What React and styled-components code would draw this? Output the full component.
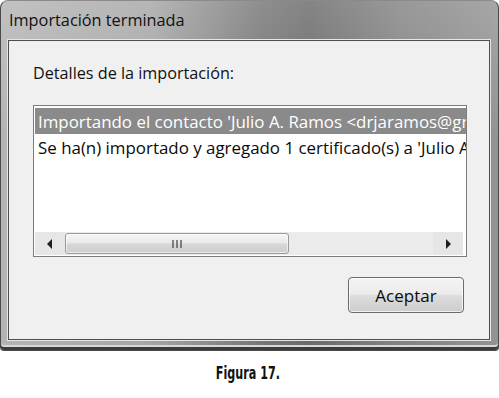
import styled, { createGlobalStyle } from 'styled-components';

const GlobalStyle = createGlobalStyle`
  html, body {
    margin: 0;
    padding: 0;
    background: #ffffff;
  }
`

const Page = styled.div`
  width: 499px;
  height: 398px;
  display: flex;
  flex-direction: column;
  background: #ffffff;
  font-family: "Open Sans", "Noto Sans", sans-serif;
`

const Window = styled.div`
  width: 499px;
  height: 351px;
  box-sizing: border-box;
  display: flex;
  flex-direction: column;
  padding: 0 8px 10px 7px;
  border: 1px solid #4a4a4a;
  border-top-color: #8a8a8a;
  border-radius: 8px 8px 4px 4px;
  background:
    linear-gradient(180deg, rgba(255,255,255,0.18) 0%, rgba(255,255,255,0) 40%),
    linear-gradient(90deg, #b4b4b4 0%, #a6a6a6 30%, #767676 52%, #6a6a6a 62%, #828282 80%, #939393 100%);
  box-shadow: inset 0 -3px 0 #3c3c3c, inset 0 -5px 0 #d8d8d8;
`

const TitleBar = styled.div`
  height: 39px;
  display: flex;
  align-items: center;
  padding-left: 1px;
  padding-bottom: 2px;
  box-sizing: border-box;
  font-size: 16.3px;
  color: #111111;
`

const Client = styled.div`
  flex: 1;
  display: flex;
  flex-direction: column;
  background: #f0f0f0;
  border: 1px solid #4e4e4e;
  box-shadow: 0 0 0 1px #e6e6e6;
  padding: 21px 22px 0 24px;
`

const Label = styled.div`
  font-size: 16.2px;
  line-height: 22px;
  color: #111111;
  margin-bottom: 21px;
`

const ListBox = styled.div`
  height: 152px;
  box-sizing: border-box;
  display: flex;
  flex-direction: column;
  background: #ffffff;
  border: 1px solid #7c7c7c;
  padding: 2px 0 1px 1px;
  overflow: hidden;
`

const Rows = styled.div`
  flex: 1;
  overflow: hidden;
`

const Row = styled.div`
  height: 26px;
  display: flex;
  align-items: center;
  padding-left: 3px;
  font-size: 16.9px;
  white-space: nowrap;
  overflow: hidden;
  color: ${p => (p.$selected ? '#ffffff' : '#0a0a0a')};
  background: ${p => (p.$selected ? '#8a8a8a' : 'transparent')};
`

const ScrollBar = styled.div`
  height: 23px;
  display: flex;
  align-items: stretch;
  background: #ebebeb;
  margin-right: 3px;
`

const ArrowButton = styled.div`
  width: 30px;
  display: flex;
  align-items: center;
  justify-content: center;
  background: #e6e6e6;
`

const Track = styled.div`
  flex: 1;
  display: flex;
  padding: 1px 0;
`

const Thumb = styled.div`
  width: 224px;
  display: flex;
  align-items: center;
  justify-content: center;
  box-sizing: border-box;
  border: 1px solid #9a9a9a;
  border-radius: 3px;
  background: linear-gradient(180deg, #f6f6f6 0%, #e9e9e9 45%, #d6d6d6 55%, #cfcfcf 100%);
  box-shadow: inset 0 0 0 1px rgba(255,255,255,0.6);
`

const Footer = styled.div`
  flex: 1;
  display: flex;
  justify-content: flex-end;
  align-items: flex-start;
  padding-top: 20px;
  padding-right: 3px;
`

const Button = styled.button`
  width: 116px;
  height: 36px;
  font-family: "Open Sans", "Noto Sans", sans-serif;
  font-size: 17px;
  color: #0a0a0a;
  border: 1px solid #6a6a6a;
  border-radius: 4px;
  background: linear-gradient(180deg, #f4f4f4 0%, #ebebeb 48%, #dcdcdc 52%, #cdcdcd 100%);
  box-shadow: inset 0 0 0 1px rgba(255,255,255,0.7);
  padding: 0;
`

const Caption = styled.div`
  flex: 1;
  display: flex;
  justify-content: center;
  padding-top: 12px;
  padding-right: 4px;
  font-family: "DejaVu Sans Condensed", "DejaVu Sans", sans-serif;
  font-weight: bold;
  font-size: 17px;
  color: #111111;
`

const CaptionText = styled.span`
  display: inline-block;
  transform: scaleX(0.73);
`

const Grip = () => (
  <svg width="12" height="10" viewBox="0 0 12 10">
    <g stroke="#555" strokeWidth="1.4">
      <line x1="2" y1="1" x2="2" y2="9" />
      <line x1="6" y1="1" x2="6" y2="9" />
      <line x1="10" y1="1" x2="10" y2="9" />
    </g>
  </svg>
)

const Arrow = ({ dir }) => (
  <svg width="8" height="10" viewBox="0 0 8 10">
    {dir === 'left'
      ? <polygon points="6,0 1,5 6,10" fill="#1e1e1e" />
      : <polygon points="2,0 7,5 2,10" fill="#1e1e1e" />}
  </svg>
)

const rows = [
  "Importando el contacto 'Julio A. Ramos <drjaramos@gmail.com>'",
  "Se ha(n) importado y agregado 1 certificado(s) a 'Julio A. Ramos'",
]

const App = () => {
  return (
    <Page>
      <GlobalStyle />
      <Window>
        <TitleBar>Importación terminada</TitleBar>
        <Client>
          <Label>Detalles de la importación:</Label>
          <ListBox>
            <Rows>
              {rows.map((text, i) => (
                <Row key={i} $selected={i === 0}>{text}</Row>
              ))}
            </Rows>
            <ScrollBar>
              <ArrowButton><Arrow dir="left" /></ArrowButton>
              <Track>
                <Thumb><Grip /></Thumb>
              </Track>
              <ArrowButton><Arrow dir="right" /></ArrowButton>
            </ScrollBar>
          </ListBox>
          <Footer>
            <Button>Aceptar</Button>
          </Footer>
        </Client>
      </Window>
      <Caption><CaptionText>Figura 17.</CaptionText></Caption>
    </Page>
  )
}

export default App;
